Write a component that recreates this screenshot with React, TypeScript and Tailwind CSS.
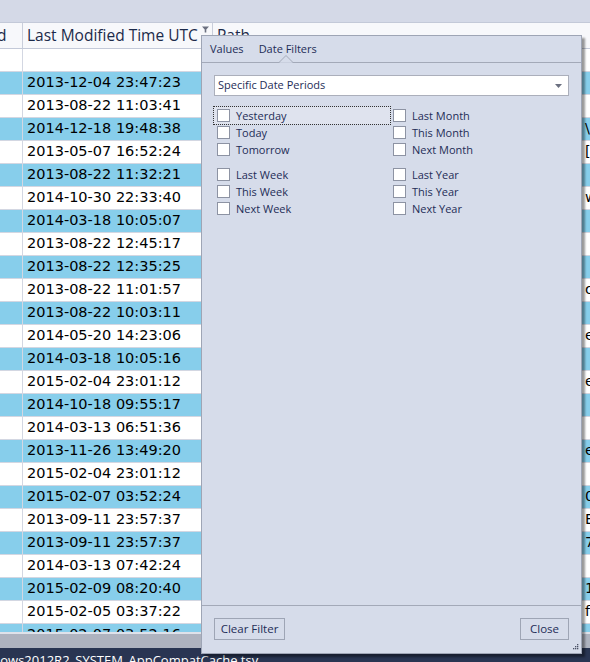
import React from "react";

const rows: { d: string; p?: string }[] = [
  { d: "2013-12-04 23:47:23" },
  { d: "2013-08-22 11:03:41" },
  { d: "2014-12-18 19:48:38", p: "\\Sy" },
  { d: "2013-05-07 16:52:24", p: "[.." },
  { d: "2013-08-22 11:32:21" },
  { d: "2014-10-30 22:33:40", p: "w" },
  { d: "2014-03-18 10:05:07" },
  { d: "2013-08-22 12:45:17" },
  { d: "2013-08-22 12:35:25" },
  { d: "2013-08-22 11:01:57", p: "o" },
  { d: "2013-08-22 10:03:11" },
  { d: "2014-05-20 14:23:06", p: "e" },
  { d: "2014-03-18 10:05:16" },
  { d: "2015-02-04 23:01:12", p: "e" },
  { d: "2014-10-18 09:55:17" },
  { d: "2014-03-13 06:51:36" },
  { d: "2013-11-26 13:49:20", p: "es" },
  { d: "2015-02-04 23:01:12" },
  { d: "2015-02-07 03:52:24", p: "0" },
  { d: "2013-09-11 23:57:37", p: "B" },
  { d: "2013-09-11 23:57:37", p: "7" },
  { d: "2014-03-13 07:42:24" },
  { d: "2015-02-09 08:20:40", p: "1" },
  { d: "2015-02-05 03:37:22", p: "f7" },
  { d: "2015-02-07 03:52:16", p: "-" },
];

const left = ["Yesterday", "Today", "Tomorrow", "", "Last Week", "This Week", "Next Week"];
const right = ["Last Month", "This Month", "Next Month", "", "Last Year", "This Year", "Next Year"];

function Check({ label, focus }: { label: string; focus?: boolean }) {
  return (
    <div
      className={
        "flex items-center h-[17px] " +
        (focus ? "outline outline-1 outline-dotted outline-[#333] bg-[#dfe3ee] -ml-[3px] pl-[3px] w-[176px]" : "")
      }
    >
      <div className="w-[13px] h-[13px] bg-white border border-[#8d93a3] shrink-0" />
      <span className="ml-[6px] text-[11px] text-[#1e2d57] leading-none">{label}</span>
    </div>
  );
}

export default function App() {
  return (
    <div
      className="relative w-[590px] h-[662px] overflow-hidden bg-white flex flex-col"
      style={{ fontFamily: "'Open Sans', 'Noto Sans', sans-serif" }}
    >
      <div className="h-[22px] bg-[#d4d9e7] shrink-0" />
      <div className="h-[27px] shrink-0 flex border-y border-[#c3c9d8] bg-[#f7f8fb] text-[#1b2a4a] text-[15.5px]">
        <div className="w-[23px] border-r border-[#c9cedb] flex items-center overflow-hidden">
          <span className="-ml-[3px]">d</span>
        </div>
        <div className="w-[190px] border-r border-[#c9cedb] flex items-center pl-[4px] relative">
          <span>Last Modified Time UTC</span>
          <svg className="absolute right-[3px] top-[3px]" width="7" height="7" viewBox="0 0 7 7">
            <path d="M0 0.5H7L4.3 3.5V6.5H2.7V3.5Z" fill="#6b7080" />
          </svg>
        </div>
        <div className="flex-1 flex items-center pl-[4px]">
          <span>Path</span>
        </div>
      </div>
      <div className="h-[23px] shrink-0 flex border-b border-[#d3d7e2]">
        <div className="w-[23px] border-r border-[#d3d7e2]" />
        <div className="w-[190px] border-r border-[#d3d7e2]" />
      </div>
      <div className="h-[560px] shrink-0 overflow-hidden">
        {rows.map((r, i) => (
          <div
            key={i}
            className={
              "h-[23px] flex border-b border-[#d3d7e2] " + (i % 2 === 0 ? "bg-[#87ceeb]" : "bg-white")
            }
          >
            <div className="w-[23px] border-r border-[#d3d7e2]" />
            <div
              className="w-[190px] border-r border-[#d3d7e2] flex items-center pl-[4px] text-black text-[14.5px]"
              style={{ fontFamily: "'DejaVu Sans', sans-serif" }}
            >
              {r.d}
            </div>
            <div
              className="flex-1 flex items-center overflow-hidden whitespace-nowrap pl-[372px] text-black text-[14.5px]"
              style={{ fontFamily: "'DejaVu Sans', sans-serif" }}
            >
              {r.p ?? ""}
            </div>
          </div>
        ))}
      </div>
      <div className="h-[16px] shrink-0 border-t-2 border-[#dfe2ea] bg-[#aeb3bf]" />
      <div className="flex-1 bg-[#293552] text-white text-[13px] leading-none overflow-hidden whitespace-nowrap pt-[6px]">
        <span className="-ml-[3px]">lows2012R2_SYSTEM_AppCompatCache.tsv</span>
      </div>

      {/* Filter popup */}
      <div className="absolute left-[201px] top-[35px] w-[381px] h-[619px] bg-[#d6dcea] border border-[#9ea5b5] shadow-[3px_3px_2px_rgba(0,0,0,0.4)] flex flex-col text-[#1e2d57]">
        <div className="h-[27px] shrink-0 border-b border-[#a3a9b8] flex items-center text-[11px] relative">
          <span className="ml-[8px]">Values</span>
          <span className="ml-[15px]">Date Filters</span>
          <svg className="absolute left-[77px] bottom-[-1px]" width="14" height="8" viewBox="0 0 14 8">
            <path d="M0 7.5L7 0.5L14 7.5" fill="#d6dcea" stroke="#a3a9b8" strokeWidth="1" />
            <rect x="1" y="7.5" width="12" height="1" fill="#d6dcea" />
          </svg>
        </div>
        <div className="flex-1 px-[12px] pt-[12px]">
          <div className="h-[21px] bg-white border border-[#abafbb] flex items-center justify-between pl-[3px] pr-[6px] text-[11px]">
            <span>Specific Date Periods</span>
            <svg width="7" height="4" viewBox="0 0 7 4">
              <path d="M0 0H7L3.5 4Z" fill="#6b7080" />
            </svg>
          </div>
          <div className="flex mt-[11px] pl-[3px]">
            <div className="w-[176px] flex flex-col">
              {left.map((l, i) =>
                l ? <Check key={i} label={l} focus={i === 0} /> : <div key={i} className="h-[8px]" />
              )}
            </div>
            <div className="flex flex-col">
              {right.map((l, i) => (l ? <Check key={i} label={l} /> : <div key={i} className="h-[8px]" />))}
            </div>
          </div>
        </div>
        <div className="h-[48px] shrink-0 border-t border-[#a3a9b8] flex items-start justify-between px-[12px] pt-[12px] relative">
          <button className="h-[22px] w-[71px] border border-[#9ea5b5] bg-[#d6dcea] text-[11.5px] text-[#1e2d57]">
            Clear Filter
          </button>
          <button className="h-[22px] w-[49px] border border-[#9ea5b5] bg-[#d6dcea] text-[11.5px] text-[#1e2d57]">
            Close
          </button>
          <svg className="absolute right-[2px] bottom-[2px]" width="7" height="7" viewBox="0 0 7 7">
            <g fill="#4a5165">
              <rect x="5" y="0" width="1.3" height="1.3" />
              <rect x="3" y="2" width="1.3" height="1.3" />
              <rect x="5" y="2" width="1.3" height="1.3" />
              <rect x="1" y="4" width="1.3" height="1.3" />
              <rect x="3" y="4" width="1.3" height="1.3" />
              <rect x="5" y="4" width="1.3" height="1.3" />
            </g>
          </svg>
        </div>
      </div>
    </div>
  );
}
